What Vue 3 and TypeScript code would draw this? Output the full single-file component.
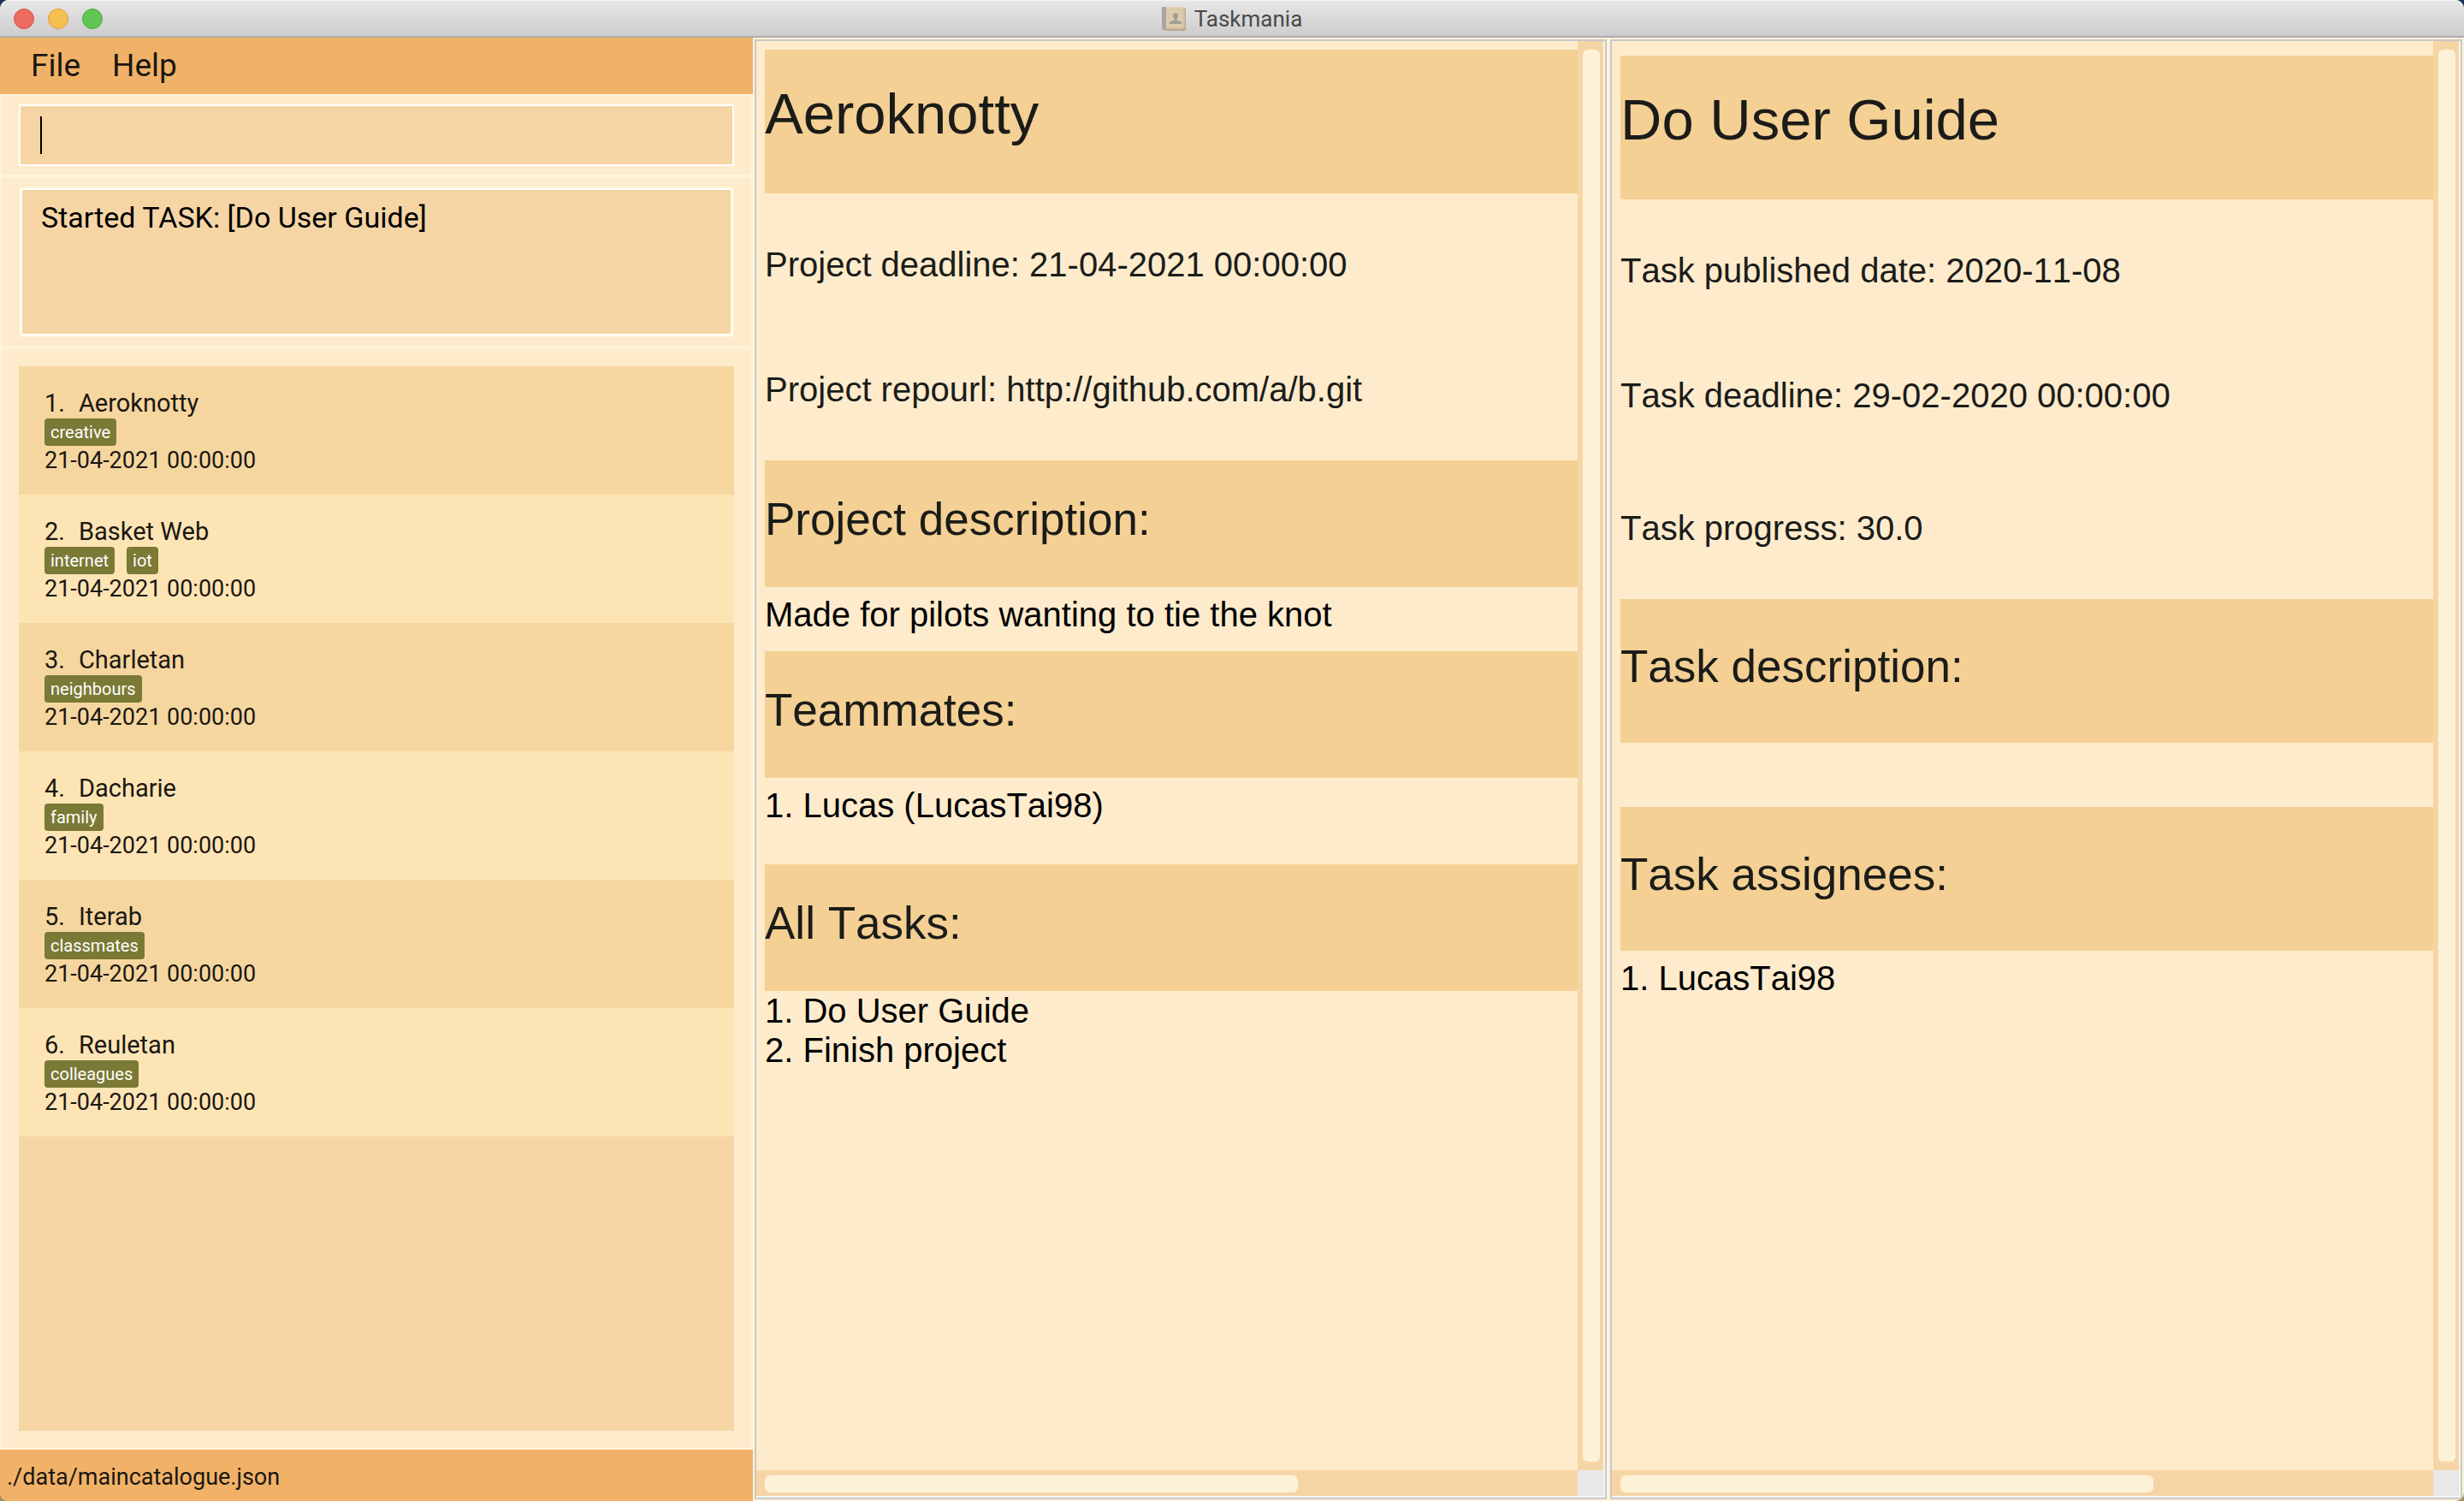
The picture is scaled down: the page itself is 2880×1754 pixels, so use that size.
<script setup lang="ts">
import { ref } from 'vue'

interface Project {
  name: string
  tags: string[]
  deadline: string
}

const command = ref('')
const result = ref('Started TASK: [Do User Guide]')
const deadline = '21-04-2021 00:00:00'

const projects: Project[] = [
  { name: 'Aeroknotty', tags: ['creative'], deadline },
  { name: 'Basket Web', tags: ['internet', 'iot'], deadline },
  { name: 'Charletan', tags: ['neighbours'], deadline },
  { name: 'Dacharie', tags: ['family'], deadline },
  { name: 'Iterab', tags: ['classmates'], deadline },
  { name: 'Reuletan', tags: ['colleagues'], deadline },
]

const teammates = ['Lucas (LucasTai98)']
const tasks = ['Do User Guide', 'Finish project']
const assignees = ['LucasTai98']
</script>

<template>
  <div class="window">
    <header class="titlebar">
      <div class="lights">
        <button class="light close" aria-label="Close"></button>
        <button class="light minimise" aria-label="Minimise"></button>
        <button class="light zoom" aria-label="Zoom"></button>
      </div>
      <div class="title">
        <svg class="app-icon" viewBox="0 0 28 28" aria-hidden="true">
          <rect x="1" y="1" width="27" height="27" rx="2" fill="#b9a88f" />
          <rect x="0" y="0" width="27" height="26" rx="2" fill="#dccbac" />
          <rect x="0" y="0" width="5" height="26" rx="1" fill="#aaa4a2" />
          <path d="M5 2H26V25H5" fill="none" stroke="#c8b084" stroke-width="1" />
          <path d="M5 1.500H26" stroke="#e8dcc4" stroke-width="1" />
          <path
            d="M16 7c-2 0-3 1.500-3 3.500 0 1.300.6 2.300 1.300 3v2.200c-1.800.8-5.800 1-5.800 4.300h15c0-3.300-4-3.500-5.800-4.300v-2.200c.7-.7 1.300-1.700 1.300-3C19 8.500 18 7 16 7z"
            fill="#a39d93"
          />
        </svg>
        <span>Taskmania</span>
      </div>
    </header>

    <main class="body">
      <div class="sidebar">
        <nav class="menu">
          <button type="button">File</button>
          <button type="button">Help</button>
        </nav>

        <section class="box command">
          <input v-model="command" class="command-input" type="text" aria-label="Command" />
          <span class="caret"></span>
        </section>

        <section class="box">
          <div class="result-frame">
            <textarea class="result" readonly aria-label="Result" :value="result"></textarea>
          </div>
        </section>

        <section class="box list-box">
          <ul class="projects">
            <li v-for="(project, i) in projects" :key="project.name" class="project">
              <div class="name"><span>{{ i + 1 }}.</span><span>{{ project.name }}</span></div>
              <div class="tags">
                <span v-for="tag in project.tags" :key="tag" class="tag">{{ tag }}</span>
              </div>
              <div class="date">{{ project.deadline }}</div>
            </li>
          </ul>
        </section>

        <footer class="status">./data/maincatalogue.json</footer>
      </div>

      <div class="panes">
        <section class="pane">
          <article class="content">
            <h1>Aeroknotty</h1>
            <div class="fields">
              <p>Project deadline: 21-04-2021 00:00:00</p>
              <p>Project repourl: http://github.com/a/b.git</p>
            </div>
            <h2>Project description:</h2>
            <p class="text">Made for pilots wanting to tie the knot</p>
            <h2>Teammates:</h2>
            <ul class="text teammates">
              <li v-for="(mate, i) in teammates" :key="mate">{{ i + 1 }}. {{ mate }}</li>
            </ul>
            <h2>All Tasks:</h2>
            <ul>
              <li v-for="(task, i) in tasks" :key="task">{{ i + 1 }}. {{ task }}</li>
            </ul>
          </article>
          <div class="track vertical"><div class="thumb"></div></div>
          <div class="track horizontal"><div class="thumb"></div></div>
          <div class="corner"></div>
        </section>

        <section class="pane task-pane">
          <article class="content">
            <h1>Do User Guide</h1>
            <div class="fields">
              <p>Task published date: 2020-11-08</p>
              <p>Task deadline: 29-02-2020 00:00:00</p>
            </div>
            <div class="progress">
              <p>Task progress: 30.0</p>
            </div>
            <h2>Task description:</h2>
            <p class="text"></p>
            <h2>Task assignees:</h2>
            <ul class="text">
              <li v-for="(person, i) in assignees" :key="person">{{ i + 1 }}. {{ person }}</li>
            </ul>
          </article>
          <div class="track vertical"><div class="thumb"></div></div>
          <div class="track horizontal"><div class="thumb"></div></div>
          <div class="corner"></div>
        </section>
      </div>
    </main>
  </div>
</template>

<style>
body {
  margin: 0;
  background: linear-gradient(#1d2f58, #a98a62);
}
</style>

<style scoped>
* {
  box-sizing: border-box;
}

.window {
  display: flex;
  flex-direction: column;
  min-height: 100vh;
  overflow: hidden;
  border-radius: 10px;
  background: #fff3d8;
  color: #1a1712;
  font-family: Roboto, 'Liberation Sans', sans-serif;
}

button {
  padding: 0;
  border: 0;
  background: none;
  color: inherit;
  font: inherit;
}

p,
ul,
h1,
h2 {
  margin: 0;
  padding: 0;
  list-style: none;
  font-weight: 400;
}

.titlebar {
  display: grid;
  grid-template-columns: 1fr auto 1fr;
  align-items: center;
  height: 44px;
  padding: 0 16px;
  border-top: 1px solid #f4f4f4;
  border-bottom: 2px solid #acacac;
  background: linear-gradient(#e6e6e6, #cdcdcd);
}

.lights {
  display: flex;
  gap: 16px;
}

.light {
  width: 24px;
  height: 24px;
  border: 1px solid;
  border-radius: 50%;
}

.close {
  border-color: #d9534a;
  background: #ee6b60;
}

.minimise {
  border-color: #dba03a;
  background: #f6bf50;
}

.zoom {
  border-color: #4fa83d;
  background: #62c655;
}

.title {
  display: flex;
  align-items: center;
  gap: 10px;
  color: #4a4a4a;
  font-size: 26px;
  line-height: 40px;
}

.app-icon {
  width: 28px;
  height: 28px;
}

.body {
  display: grid;
  grid-template-columns: 11fr 25fr;
  flex: 1;
}

.sidebar {
  display: flex;
  flex-direction: column;
  min-width: 0;
}

.menu {
  display: flex;
  gap: 37px;
  padding-left: 36px;
  background: #f1b268;
  font-size: 37px;
  line-height: 66px;
}

.box {
  padding: 10px 20px;
  border: 2px solid #fff4da;
  background: #fdebcc;
}

.command {
  position: relative;
}

.command-input {
  display: block;
  width: 100%;
  height: 72px;
  padding: 0 22px;
  border: 2px solid #fff;
  border-radius: 0;
  outline: none;
  background: #f6d5a5;
  color: #000;
  font: inherit;
  font-size: 34px;
}

.caret {
  position: absolute;
  top: 24px;
  left: 45px;
  width: 2px;
  height: 44px;
  background: #000;
}

.result-frame {
  padding: 2px;
  background: #fff4da;
}

.result {
  display: block;
  width: 100%;
  height: 172px;
  padding: 9px 22px;
  border: 2px solid #fff;
  border-radius: 3px;
  outline: none;
  resize: none;
  background: #f6d5a5;
  color: #000;
  font: inherit;
  font-size: 34px;
  line-height: 46px;
}

.list-box {
  display: flex;
  flex: 1;
  flex-direction: column;
  padding: 20px;
}

.projects {
  flex: 1;
  background: #f6d5a5;
}

.project {
  height: 150px;
  padding: 25px 30px 0;
  background: #f6d69f;
}

.project:nth-child(even) {
  background: #fde4b4;
}

.name {
  display: flex;
  gap: 16px;
  font-size: 29px;
  line-height: 36px;
}

.tags {
  display: flex;
  gap: 14px;
}

.tag {
  padding: 0 7px;
  border-radius: 4px;
  background: #7a7935;
  color: #fff;
  font-size: 20px;
  line-height: 32px;
}

.date {
  font-size: 27px;
  line-height: 34px;
}

.status {
  padding: 4px 8px 0;
  background: #f1b268;
  font-size: 27px;
  line-height: 56px;
}

.panes {
  display: grid;
  grid-template-columns: 1fr 1fr;
  gap: 4px;
  padding: 2px;
  font-family: 'Liberation Sans', Arial, sans-serif;
  font-kerning: none;
}

.pane {
  display: grid;
  grid-template-columns: minmax(0, 1fr) 30px;
  grid-template-rows: 1fr 30px;
  padding: 0 2px 2px 0;
  border: 2px solid #c8c8c8;
  background: #f4f4f4;
}

.content {
  padding: 10px 0 0 10px;
  background: #fdebcc;
  color: #000;
  font-size: 40px;
  line-height: 46px;
}

.task-pane .content {
  padding-top: 17px;
}

h1 {
  padding: 37px 0 55px;
  background: #f4d094;
  color: #1b1c19;
  font-size: 67px;
  line-height: 76px;
}

h2 {
  padding: 39px 0 49px;
  background: #f4d094;
  color: #1b1c19;
  font-size: 53px;
  line-height: 60px;
}

.task-pane h2 {
  padding: 49px 0 59px;
}

.fields {
  display: flex;
  flex-direction: column;
  gap: 100px;
  padding: 60px 0;
  color: #1b1c19;
}

.progress {
  padding: 49px 0 60px;
  color: #1b1c19;
}

.text {
  min-height: 75px;
  padding: 9px 0 20px;
}

.teammates {
  padding-bottom: 46px;
}

.track {
  display: flex;
  background: #f6d5a5;
}

.vertical {
  padding: 10px 4px 10px 6px;
}

.horizontal {
  padding: 6px 0 4px 10px;
}

.thumb {
  width: 100%;
  border-radius: 6px;
  background: #fdf2d8;
}

.horizontal .thumb {
  width: calc(100% * 21 / 32);
}

.corner {
  background: #e8e8e8;
}
</style>
